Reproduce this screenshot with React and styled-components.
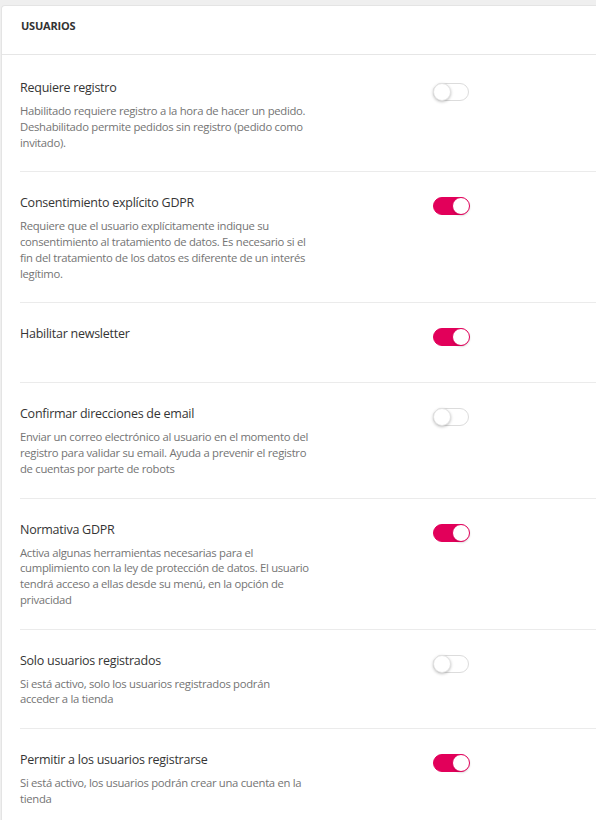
import React from "react";
import styled, { createGlobalStyle } from "styled-components";

const GlobalStyle = createGlobalStyle`
  html, body { margin: 0; padding: 0; background: #efefef; }
  body { font-family: "Open Sans", "Noto Sans", Arial, sans-serif; }
  * { box-sizing: border-box; }
`;

const Page = styled.div`
  padding: 5px 0 0 1px;
  width: 596px;
  height: 820px;
  overflow: hidden;
`;

const Card = styled.section`
  background: #fff;
  border: 1px solid #e4e4e4;
  border-right: none;
  border-radius: 4px 0 0 0;
  width: 640px;
  min-height: 900px;
`;

const CardHeader = styled.header`
  height: 49px;
  padding: 12px 19px 0;
  display: flex;
  align-items: flex-start;
  border-bottom: 1px solid #e6e6e6;
  font-size: 11px;
  line-height: 15px;
  font-weight: 700;
  color: #333;
  letter-spacing: -0.2px;
`;

const List = styled.div`
  padding-left: 18px;
`;

const Row = styled.div`
  display: grid;
  grid-template-columns: 290px 36px;
  column-gap: 123px;
  padding: 22px 0 21px;
  min-height: 80px;
  border-bottom: 1px solid #ebebeb;
  &:first-child { padding-top: 24px; }
`;

const TextCol = styled.div`
  display: flex;
  flex-direction: column;
`;

const Title = styled.div`
  font-size: 12.5px;
  line-height: 18px;
  color: #353535;
  letter-spacing: -0.25px;
  white-space: nowrap;
`;

const Description = styled.p`
  margin: 6px 0 0;
  font-size: 11.3px;
  line-height: 15.75px;
  color: #747474;
  letter-spacing: -0.3px;
`;

const Track = styled.button`
  position: relative;
  margin-top: 3px;
  width: 36px;
  height: 18px;
  padding: 0;
  border-radius: 9px;
  border: 1px solid ${(p) => (p.$on ? "#e2005a" : "#dcdcdc")};
  background: ${(p) => (p.$on ? "#e2005a" : "#fff")};
  cursor: pointer;
  ${Row}:first-child & { margin-top: 4px; }
`;

const Knob = styled.span`
  position: absolute;
  top: -1px;
  left: ${(p) => (p.$on ? "18px" : "-1px")};
  width: 18px;
  height: 18px;
  border-radius: 50%;
  background: #fff;
  border: 1px solid ${(p) => (p.$on ? "#e2005a" : "#e2e2e2")};
  box-shadow: ${(p) => (p.$on ? "0 1px 2px rgba(0,0,0,0.15)" : "0 1px 3px rgba(0,0,0,0.25)")};
`;

const Toggle = ({ on }) => (
  <Track $on={on} aria-pressed={on}>
    <Knob $on={on} />
  </Track>
);

const settings = [
  {
    title: "Requiere registro",
    desc: "Habilitado requiere registro a la hora de hacer un pedido. Deshabilitado permite pedidos sin registro (pedido como invitado).",
    on: false,
  },
  {
    title: "Consentimiento explícito GDPR",
    desc: "Requiere que el usuario explícitamente indique su consentimiento al tratamiento de datos. Es necesario si el fin del tratamiento de los datos es diferente de un interés legítimo.",
    on: true,
  },
  { title: "Habilitar newsletter", desc: "", on: true },
  {
    title: "Confirmar direcciones de email",
    desc: "Enviar un correo electrónico al usuario en el momento del registro para validar su email. Ayuda a prevenir el registro de cuentas por parte de robots",
    on: false,
  },
  {
    title: "Normativa GDPR",
    desc: "Activa algunas herramientas necesarias para el cumplimiento con la ley de protección de datos. El usuario tendrá acceso a ellas desde su menú, en la opción de privacidad",
    on: true,
  },
  {
    title: "Solo usuarios registrados",
    desc: "Si está activo, solo los usuarios registrados podrán acceder a la tienda",
    on: false,
  },
  {
    title: "Permitir a los usuarios registrarse",
    desc: "Si está activo, los usuarios podrán crear una cuenta en la tienda",
    on: true,
  },
];

export default function App() {
  return (
    <>
      <GlobalStyle />
      <Page>
        <Card>
          <CardHeader>USUARIOS</CardHeader>
          <List>
            {settings.map((s) => (
              <Row key={s.title}>
                <TextCol>
                  <Title>{s.title}</Title>
                  {s.desc && <Description>{s.desc}</Description>}
                </TextCol>
                <Toggle on={s.on} />
              </Row>
            ))}
          </List>
        </Card>
      </Page>
    </>
  );
}
